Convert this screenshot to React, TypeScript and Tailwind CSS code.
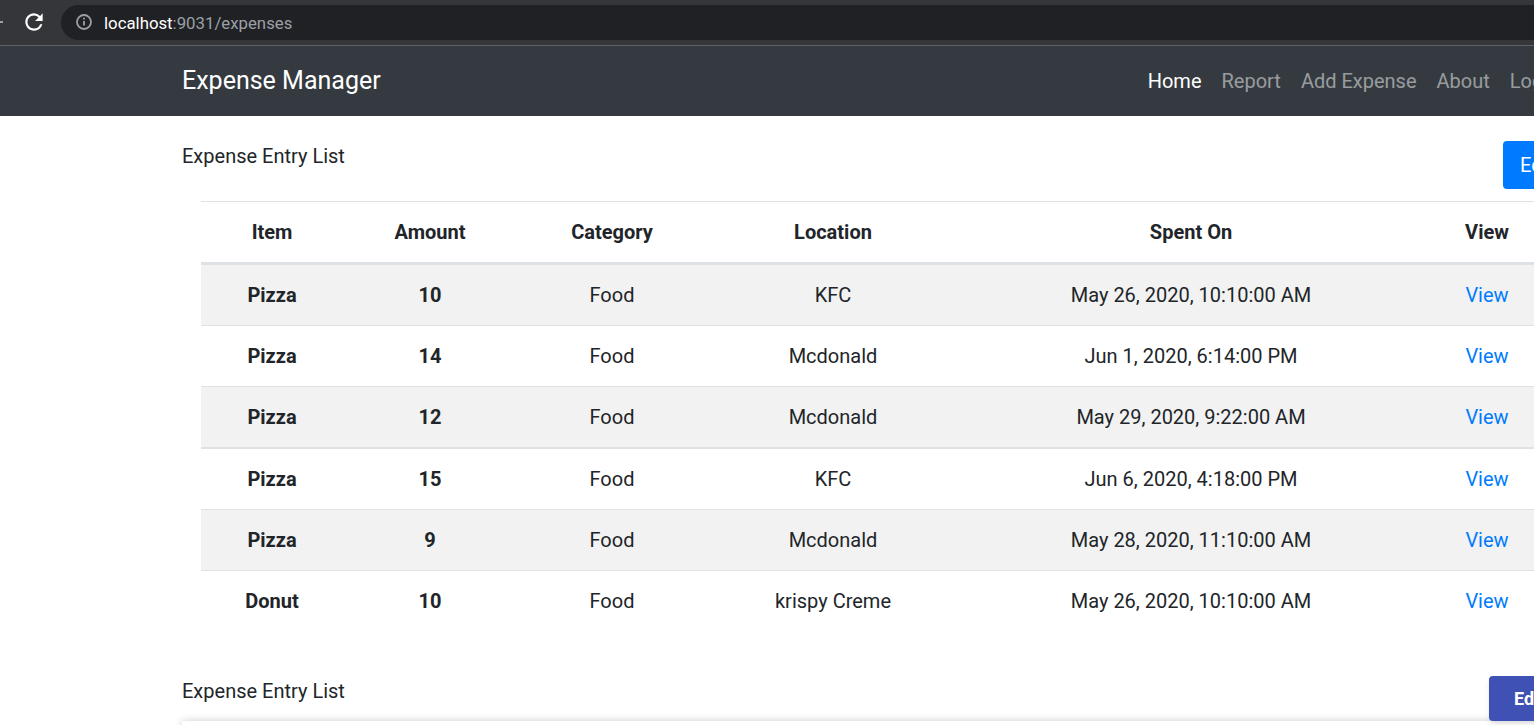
const columns = ['Item', 'Amount', 'Category', 'Location', 'Spent On', 'View'];

const expenses = [
  { item: 'Pizza', amount: 10, category: 'Food', location: 'KFC', spentOn: 'May 26, 2020, 10:10:00 AM', rowClass: 'h-[62px] border-b' },
  { item: 'Pizza', amount: 14, category: 'Food', location: 'Mcdonald', spentOn: 'Jun 1, 2020, 6:14:00 PM', rowClass: 'h-[61px] border-b' },
  { item: 'Pizza', amount: 12, category: 'Food', location: 'Mcdonald', spentOn: 'May 29, 2020, 9:22:00 AM', rowClass: 'h-[61px] border-b-2' },
  { item: 'Pizza', amount: 15, category: 'Food', location: 'KFC', spentOn: 'Jun 6, 2020, 4:18:00 PM', rowClass: 'h-[62px] border-b' },
  { item: 'Pizza', amount: 9, category: 'Food', location: 'Mcdonald', spentOn: 'May 28, 2020, 11:10:00 AM', rowClass: 'h-[61px] border-b' },
  { item: 'Donut', amount: 10, category: 'Food', location: 'krispy Creme', spentOn: 'May 26, 2020, 10:10:00 AM', rowClass: 'h-[61px]' },
];

function BrowserBar() {
  return (
    <div className="flex h-[46px] shrink-0 items-center border-b border-[#5f6165] bg-[#35363a] pb-[1px]">
      <div className="h-[2px] w-[3px] bg-[#9aa0a6]" />
      <svg viewBox="0 0 24 24" className="ml-[18px] h-[26px] w-[26px] fill-white">
        <path d="M17.65 6.35A7.958 7.958 0 0 0 12 4c-4.42 0-7.99 3.58-7.99 8s3.57 8 7.99 8c3.73 0 6.84-2.55 7.73-6h-2.08A5.99 5.99 0 0 1 12 18c-3.31 0-6-2.69-6-6s2.69-6 6-6c1.66 0 3.14.69 4.22 1.78L13 11h7V4l-2.35 2.35z" />
      </svg>
      <div className="ml-[14px] flex h-[35px] flex-1 items-center rounded-l-[18px] bg-[#202124] pl-[15px]">
        <svg viewBox="0 0 16 16" className="h-4 w-4 fill-none stroke-[#9aa0a6]">
          <circle cx="8" cy="8" r="7" strokeWidth="1.8" />
          <path d="M8 7v4.6M8 3.8v1.8" strokeWidth="1.8" />
        </svg>
        <span className="ml-3 pt-1 text-[16.8px] text-[#9aa0a6]">
          <span className="text-white">localhost</span>:9031/expenses
        </span>
      </div>
    </div>
  );
}

function Navbar() {
  return (
    <nav className="flex h-[70px] w-[1700px] shrink-0 items-center bg-[#343a40] pl-[182px]">
      <span className="text-[25px] text-white">Expense Manager</span>
      <div className="ml-[767px] flex gap-5 text-xl text-white/50">
        <span className="text-white">Home</span>
        <span>Report</span>
        <span>Add Expense</span>
        <span>About</span>
        <span>Logout</span>
      </div>
    </nav>
  );
}

function ExpenseTable() {
  return (
    <table className="ml-[19px] w-[1350px] table-fixed border-collapse text-xl text-[#212529]">
      <colgroup>
        <col className="w-[142px]" />
        <col className="w-[174px]" />
        <col className="w-[190px]" />
        <col className="w-[252px]" />
        <col className="w-[464px]" />
        <col className="w-[128px]" />
      </colgroup>
      <thead>
        <tr className="h-[62px] border-t border-b-[3px] border-t-[#dee2e6] border-b-[#dee2e6]">
          {columns.map((name) => (
            <th key={name} className="font-bold">{name}</th>
          ))}
        </tr>
      </thead>
      <tbody>
        {expenses.map((row, i) => (
          <tr key={i} className={`${row.rowClass} border-[#dee2e6] ${i % 2 === 0 ? 'bg-[#f2f2f2]' : 'bg-white'}`}>
            <td className="text-center font-bold">{row.item}</td>
            <td className="text-center font-bold">{row.amount}</td>
            <td className="text-center">{row.category}</td>
            <td className="text-center">{row.location}</td>
            <td className="text-center">{row.spentOn}</td>
            <td className="text-center text-[#007bff]">View</td>
          </tr>
        ))}
      </tbody>
    </table>
  );
}

export default function App() {
  return (
    <div className="flex h-[725px] w-[1534px] flex-col overflow-hidden bg-white font-['Roboto',sans-serif]">
      <BrowserBar />
      <Navbar />
      <main className="w-[1603px] pl-[182px]">
        <div className="flex h-[85px] items-start justify-between">
          <span className="mt-[26px] text-xl text-[#212529]">Expense Entry List</span>
          <button className="mt-[25px] h-12 w-[100px] rounded bg-[#007bff] pl-[17px] text-left text-xl text-white">Edit</button>
        </div>
        <ExpenseTable />
        <div className="mt-[44px] flex h-[45px] items-start justify-between">
          <span className="mt-[1px] text-xl text-[#212529]">Expense Entry List</span>
          <button className="h-[45px] w-[114px] rounded bg-[#3f51b5] pt-[2px] pl-[25px] text-left text-lg font-bold text-white shadow-md">Edit</button>
        </div>
        <div className="h-20 bg-white shadow-[0_0_8px_rgba(0,0,0,0.2)]" />
      </main>
    </div>
  );
}
